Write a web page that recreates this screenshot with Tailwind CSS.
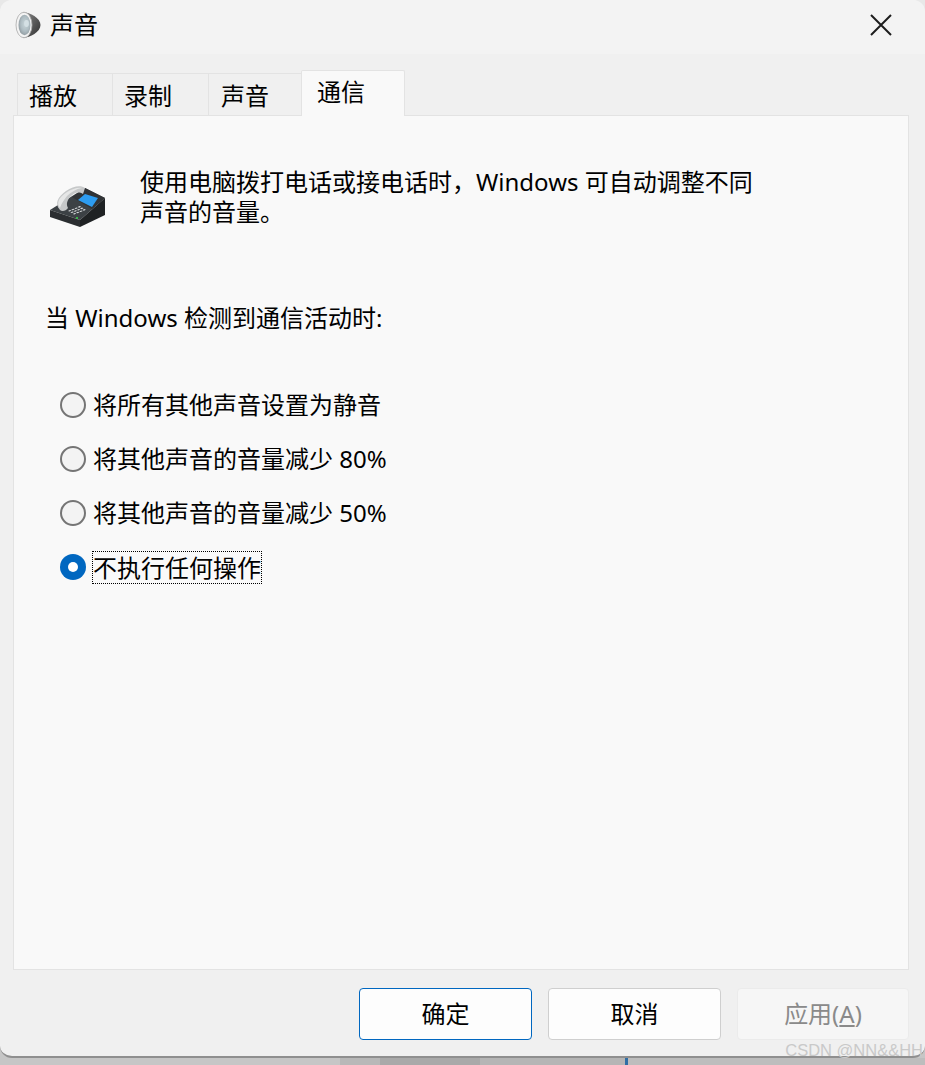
<!DOCTYPE html>
<html lang="zh-CN">
<head>
  <meta charset="UTF-8">
  <title>声音</title>
  <script src="https://cdn.jsdelivr.net/npm/@tailwindcss/browser@4"></script>
</head>
<body class="m-0">
  <div class="relative w-[925px] h-[1065px] overflow-hidden bg-[linear-gradient(#e8e8e8_0_50%,#c6c6c6_50%_100%)] font-['Noto_Sans','Noto_Sans_CJK_SC',sans-serif] text-[24px] text-black">
    <!-- Dialog -->
    <div class="flex flex-col w-[925px] h-[1058px] bg-[#f0f0f0] rounded-[12px] overflow-hidden border-b-2 border-[#8f8f8f]">
      <!-- Title bar -->
      <div class="flex items-center h-[54px] shrink-0 bg-[#f3f3f3] pb-[4px] pl-[15px] pr-[33px]">
        <svg class="w-[26px] h-[28px] mr-[9px]" viewBox="0 0 26 28">
          <defs>
            <linearGradient id="cone" x1="0" y1="0" x2="1" y2="1">
              <stop offset="0" stop-color="#8a8a8a"/>
              <stop offset="1" stop-color="#2e2e2e"/>
            </linearGradient>
            <radialGradient id="disc" cx="0.55" cy="0.45" r="0.6">
              <stop offset="0" stop-color="#c9d6da"/>
              <stop offset="0.6" stop-color="#aebcc2"/>
              <stop offset="1" stop-color="#8d979c"/>
            </radialGradient>
          </defs>
          <path d="M8 1C15 1.5 25.500 7 25.500 14S15 26.500 8 27z" fill="url(#cone)"/>
          <ellipse cx="9" cy="14" rx="8" ry="12.800" fill="#f4f4f4" stroke="#a8a8a8" stroke-width="0.8"/>
          <ellipse cx="9.500" cy="14" rx="6" ry="10.200" fill="url(#disc)"/>
          <ellipse cx="11.500" cy="12.500" rx="2.400" ry="3.400" fill="#d4e0e4"/>
        </svg>
        <span class="leading-none">声音</span>
        <svg class="ml-auto w-[22px] h-[22px]" viewBox="0 0 22 22" fill="none" stroke="#1c1c1c" stroke-width="2">
          <path d="M1 1l20 20M21 1L1 21"/>
        </svg>
      </div>

      <!-- Tabs -->
      <div class="flex items-end h-[61px] shrink-0 pl-[17px]">
        <div class="w-[96px] h-[42px] pl-[11px] pt-[3px] leading-[38px] border border-b-0 border-[#e3e3e3] bg-[#f0f0f0]">播放</div>
        <div class="w-[96px] h-[42px] pl-[11px] pt-[3px] leading-[38px] border border-l-0 border-b-0 border-[#e3e3e3] bg-[#f0f0f0]">录制</div>
        <div class="w-[92px] h-[42px] pl-[12px] pt-[3px] leading-[38px] border-t border-[#e3e3e3] bg-[#f0f0f0]">声音</div>
        <div class="relative z-10 w-[104px] h-[46px] -mb-px pl-[15px] leading-[42px] border border-b-0 border-[#e3e3e3] bg-[#f9f9f9] rounded-t-[2px]">通信</div>
      </div>

      <!-- Panel -->
      <div class="ml-[13px] mr-[16px] h-[855px] shrink-0 border border-[#e3e3e3] bg-[#f9f9f9]">
        <div class="flex pl-[34px] pt-[52px]">
          <svg class="w-[60px] h-[45px] mt-[15px] shrink-0" viewBox="0 0 60 45">
            <path d="M2 27L37 5l20 10-25 22z" fill="#3c4145"/>
            <path d="M2 27l30 10v7L2 34z" fill="#2b2e31"/>
            <path d="M32 37l25-22v17L32 44z" fill="#1f2224"/>
            <path d="M24 14L37 5l20 10-13 11z" fill="#303336"/>
            <path d="M30 17l7-6 13 4-6 9z" fill="#2d9cf0"/>
            <path d="M12 27C6 20 10 14 18 8 25 3 33 2 37 5l-2 6C30 8 26 10 22 14c-3 4-4 7-2 11-2 3-6 4-8 2z" fill="#c6c8c9"/>
            <path d="M12 25C8 20 11 14 19 9c5-3 11-5 15-4-6 1-11 4-15 8-3 4-6 8-7 12z" fill="#e6e7e7"/>
            <g fill="#d9dcde">
              <path d="M20 28l2-1 1.500.6-2 1zM23.200 26.700l2-1 1.500.6-2 1zM26.400 25.400l2-1 1.500.6-2 1zM29.600 24.100l2-1 1.500.6-2 1z"/>
              <path d="M22.400 29.500l2-1 1.500.6-2 1zM25.600 28.200l2-1 1.500.6-2 1zM28.800 26.900l2-1 1.500.6-2 1zM32 25.600l2-1 1.500.6-2 1z"/>
              <path d="M24.800 31l2-1 1.500.6-2 1zM28 29.700l2-1 1.500.6-2 1zM31.200 28.400l2-1 1.500.6-2 1zM34.400 27.100l2-1 1.500.6-2 1z"/>
            </g>
            <circle cx="29" cy="35" r="1.100" fill="#3bd14a"/>
          </svg>
          <p class="w-[620px] ml-[32px] -mt-[1px] leading-[30px]">使用电脑拨打电话或接电话时，Windows 可自动调整不同声音的音量。</p>
        </div>

        <p class="ml-[31px] mt-[75px] leading-[30px]">当 Windows 检测到通信活动时:</p>

        <div class="flex flex-col ml-[46px] mt-[44px]">
          <label class="flex items-center h-[55px]">
            <span class="w-[26px] h-[26px] mr-[7px] rounded-full border-2 border-[#757575] bg-[#f3f3f3]"></span>
            <span>将所有其他声音设置为静音</span>
          </label>
          <label class="flex items-center h-[54px]">
            <span class="w-[26px] h-[26px] mr-[7px] rounded-full border-2 border-[#757575] bg-[#f3f3f3]"></span>
            <span>将其他声音的音量减少 80%</span>
          </label>
          <label class="flex items-center h-[54px]">
            <span class="w-[26px] h-[26px] mr-[7px] rounded-full border-2 border-[#757575] bg-[#f3f3f3]"></span>
            <span>将其他声音的音量减少 50%</span>
          </label>
          <label class="flex items-center h-[54px]">
            <span class="flex items-center justify-center w-[26px] h-[26px] mr-[6px] rounded-full bg-[#0067c0]">
              <span class="w-[10px] h-[10px] rounded-full bg-white"></span>
            </span>
            <span class="h-[33px] leading-[31px] border border-dotted border-black">不执行任何操作</span>
          </label>
        </div>
      </div>

      <!-- Footer buttons -->
      <div class="flex justify-end gap-[16px] pt-[18px] pr-[16px]">
        <button class="w-[173px] h-[52px] rounded-[4px] border border-[#0067c0] bg-[#fdfdfd]">确定</button>
        <button class="w-[173px] h-[52px] rounded-[4px] border border-[#cfcfcf] bg-[#fdfdfd]">取消</button>
        <button class="w-[172px] h-[52px] rounded-[4px] border border-[#ebebeb] bg-[#f6f6f6] text-[#8a8a8a]">应用(<span class="underline">A</span>)</button>
      </div>
    </div>

    <!-- Desktop showing under the window -->
    <div class="flex h-[7px] ml-[340px]">
      <div class="w-[40px] bg-[#b8b8b8]"></div>
      <div class="w-[100px] bg-[#a9a9a9]"></div>
      <div class="w-[145px] bg-[#b5b5b5]"></div>
      <div class="w-[3px] bg-[#2f6ea5]"></div>
      <div class="w-[297px] bg-[#bdbdbd]"></div>
    </div>

    <!-- Watermark -->
    <div class="absolute right-[2px] top-[1040px] text-[16.500px] leading-[20px] text-[#c9c9c9] font-['Liberation_Sans',sans-serif]">CSDN @NN&amp;&amp;HH</div>
  </div>
</body>
</html>
